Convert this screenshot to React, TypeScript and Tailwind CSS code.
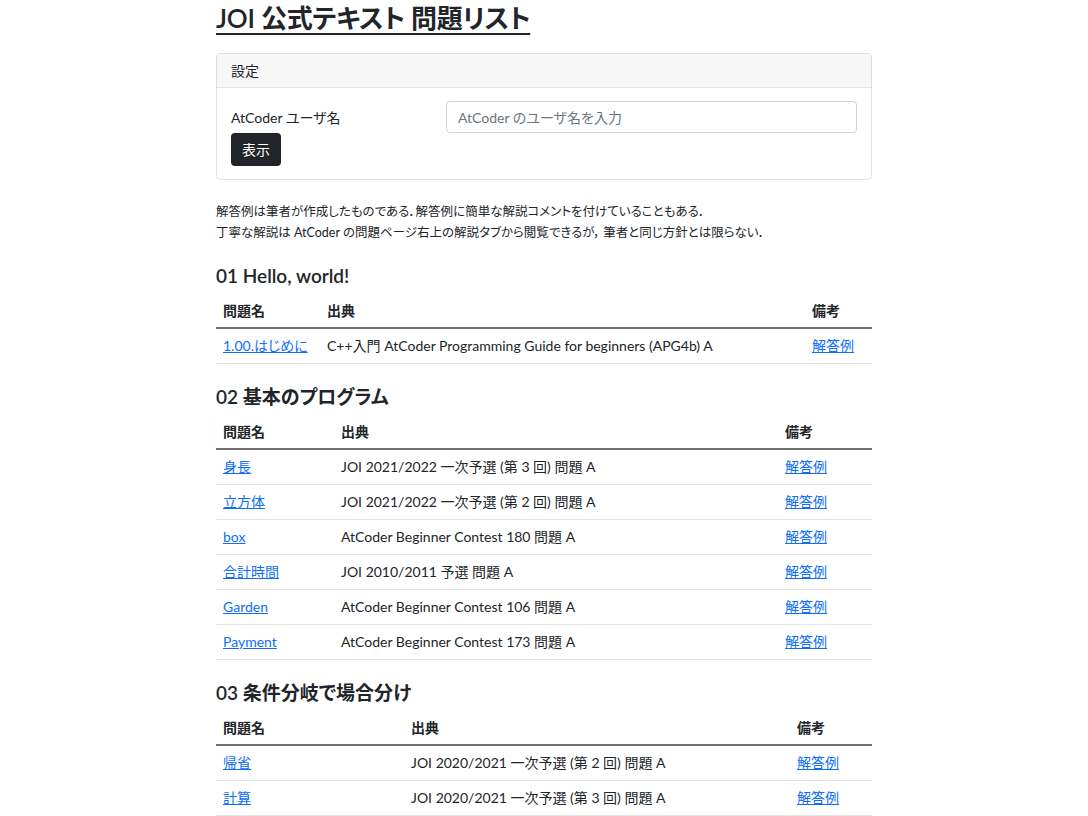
import React from "react";

type Row = { name: string; src: string };
type Section = { title: string; widths: [number, number, number]; rows: Row[] };

const sections: Section[] = [
  {
    title: "01 Hello, world!",
    widths: [104, 485, 67],
    rows: [{ name: "1.00.はじめに", src: "C++入門 AtCoder Programming Guide for beginners (APG4b) A" }],
  },
  {
    title: "02 基本のプログラム",
    widths: [118, 444, 94],
    rows: [
      { name: "身長", src: "JOI 2021/2022 一次予選 (第 3 回) 問題 A" },
      { name: "立方体", src: "JOI 2021/2022 一次予選 (第 2 回) 問題 A" },
      { name: "box", src: "AtCoder Beginner Contest 180 問題 A" },
      { name: "合計時間", src: "JOI 2010/2011 予選 問題 A" },
      { name: "Garden", src: "AtCoder Beginner Contest 106 問題 A" },
      { name: "Payment", src: "AtCoder Beginner Contest 173 問題 A" },
    ],
  },
  {
    title: "03 条件分岐で場合分け",
    widths: [188, 386, 82],
    rows: [
      { name: "帰省", src: "JOI 2020/2021 一次予選 (第 2 回) 問題 A" },
      { name: "計算", src: "JOI 2020/2021 一次予選 (第 3 回) 問題 A" },
    ],
  },
];

function ProblemTable({ s }: { s: Section }) {
  return (
    <div className="mt-[21px]">
      <h2 className="text-[19px] leading-[24px] font-semibold mb-[6px]">{s.title}</h2>
      <table className="w-full table-fixed border-collapse text-[14px]">
        <colgroup>
          <col style={{ width: s.widths[0] }} />
          <col style={{ width: s.widths[1] }} />
          <col style={{ width: s.widths[2] }} />
        </colgroup>
        <thead>
          <tr className="border-b-2 border-[#707070]">
            <th className="text-left font-semibold px-[7px] pt-[7px] pb-[6px] leading-[20px]">問題名</th>
            <th className="text-left font-semibold px-[7px] pt-[7px] pb-[6px] leading-[20px]">出典</th>
            <th className="text-left font-semibold px-[7px] pt-[7px] pb-[6px] leading-[20px]">備考</th>
          </tr>
        </thead>
        <tbody>
          {s.rows.map((r) => (
            <tr key={r.name} className="border-b border-[#e3e3e3]">
              <td className="px-[7px] py-[7px] leading-[20px]">
                <a href="#" className="text-[#0d6efd] underline">{r.name}</a>
              </td>
              <td className="px-[7px] py-[7px] leading-[20px] whitespace-nowrap">{r.src}</td>
              <td className="px-[7px] py-[7px] leading-[20px]">
                <a href="#" className="text-[#0d6efd] underline">解答例</a>
              </td>
            </tr>
          ))}
        </tbody>
      </table>
    </div>
  );
}

export default function App() {
  return (
    <div
      className="min-h-screen bg-white text-[#212529] text-[14px] [font-feature-settings:'palt']"
      style={{ fontFamily: 'Lato, "Noto Sans CJK JP", sans-serif' }}
    >
      <div className="w-[656px] mx-auto">
        <h1 className="text-[26px] leading-[36px] font-semibold tracking-[-0.01em] underline underline-offset-[5px] decoration-2">
          JOI 公式テキスト 問題リスト
        </h1>
        <div className="mt-[17px] border border-[#dfdfdf] rounded-[4px]">
          <div className="h-[34px] flex items-center px-[14px] bg-[#f7f7f7] border-b border-[#e5e5e5] rounded-t-[4px]">
            設定
          </div>
          <div className="px-[14px] pt-[13px] pb-[13px]">
            <div className="flex items-center">
              <div className="w-[215px]">AtCoder ユーザ名</div>
              <input
                className="flex-1 h-[32px] border border-[#ced4da] rounded-[4px] px-[11px] text-[14px] outline-none placeholder:text-[#6c757d]"
                placeholder="AtCoder のユーザ名を入力"
              />
            </div>
            <button className="h-[33px] px-[11px] bg-[#212529] text-white rounded-[4px] text-[14px]">表示</button>
          </div>
        </div>
        <p className="mt-[21px] leading-[21px] text-[12.5px]">
          解答例は筆者が作成したものである．解答例に簡単な解説コメントを付けていることもある．
          <br />
          丁寧な解説は AtCoder の問題ページ右上の解説タブから閲覧できるが，&nbsp;筆者と同じ方針とは限らない．
        </p>
        {sections.map((s) => (
          <ProblemTable key={s.title} s={s} />
        ))}
      </div>
    </div>
  );
}
